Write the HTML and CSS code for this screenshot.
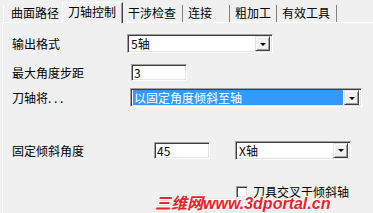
FILE: index.html
```html
<!DOCTYPE html>
<html>
<head>
<meta charset="utf-8">
<link rel="stylesheet" href="styles.css">
</head>
<body>
<div class="win">
  <div class="tabs">
    <div class="tab t1">曲面路径</div>
    <div class="tab active t2">刀轴控制</div>
    <div class="tab t3">干涉检查</div>
    <div class="tab t4">连接</div>
    <div class="tab t5">粗加工</div>
    <div class="tab t6">有效工具</div>
  </div>
  <div class="panel">
    <div class="row r1">
      <span class="label">输出格式</span>
      <div class="combo c1"><span class="val">5轴</span><span class="btn"><i></i></span></div>
    </div>
    <div class="row r2">
      <span class="label">最大角度步距</span>
      <div class="edit e1">3</div>
    </div>
    <div class="row r3">
      <span class="label">刀轴将. . .</span>
      <div class="combo c2"><span class="val sel">以固定角度倾斜至轴</span><span class="btn"><i></i></span></div>
    </div>
    <div class="row r4">
      <span class="label">固定倾斜角度</span>
      <div class="edit e2">45</div>
      <div class="combo c3"><span class="val">X轴</span><span class="btn"><i></i></span></div>
    </div>
    <div class="row r5">
      <span class="check"></span>
      <span class="clabel">刀具交叉于倾斜轴</span>
    </div>
  </div>
  <div class="watermark">三维网www.3dportal.cn</div>
</div>
</body>
</html>
```

FILE: styles.css
```css
html, body {
  margin: 0;
  padding: 0;
  background: #f0f0f0;
}
body {
  font-family: "Noto Sans CJK SC", "Liberation Sans", sans-serif;
  font-size: 12px;
  color: #000;
  width: 373px;
  height: 213px;
  overflow: hidden;
}
.win {
  position: relative;
  width: 373px;
  height: 213px;
}
.tabs {
  display: flex;
  align-items: flex-end;
  height: 22px;
  padding-left: 3px;
  position: relative;
  z-index: 2;
}
.tab {
  box-sizing: border-box;
  height: 17px;
  line-height: 16px;
  padding-left: 6px;
  white-space: nowrap;
  border-right: 1px solid #808080;
}
.t1 { width: 59px; padding-left: 7px; border-right: none; border-left: 1px solid #fff; }
.t2 {
  width: 61px;
  height: 21px;
  line-height: 18px;
  margin-bottom: -1px;
  padding-left: 5px;
  background: #f0f0f0;
  border-top: 1px solid #fff;
  border-left: 1px solid #fff;
  border-right: 1px solid #404040;
  box-shadow: inset -1px 0 0 #a0a0a0;
}
.t3 { width: 60px; padding-left: 5px; }
.t4 { width: 47px; padding-left: 5px; }
.t5 { width: 47px; padding-left: 5px; }
.t6 { width: 60px; padding-left: 5px; }

.panel {
  box-sizing: border-box;
  margin-left: 2px;
  height: 191px;
  border-top: 1px solid #fff;
  border-left: 1px solid #fff;
  padding-top: 11px;
}
.row {
  display: flex;
  align-items: center;
}
.label {
  width: 115px;
  padding-left: 9px;
  white-space: nowrap;
  flex: none;
}
.r1 { height: 19px; }
.r2 { height: 17px; margin-top: 11px; }
.r3 { height: 19px; margin-top: 7px; }
.r4 { height: 18px; margin-top: 34px; }
.r5 { height: 13px; margin-top: 26px; padding-left: 233px; }

.edit, .combo {
  box-sizing: border-box;
  background: #fff;
  border-top: 1px solid #a0a0a0;
  border-left: 1px solid #a0a0a0;
  border-right: 1px solid #fff;
  border-bottom: 1px solid #fff;
  box-shadow: inset 1px 1px 0 #404040, inset -1px -1px 0 #e3e3e3;
  display: flex;
  align-items: center;
  padding-left: 2px;
  white-space: nowrap;
  flex: none;
}
.edit { height: 17px; width: 56px; }
.e1 { margin-left: 4px; }
.e2 { margin-left: 27px; }
.combo { height: 19px; justify-content: space-between; padding-right: 2px; }
.c1 { width: 146px; }
.c2 { width: 232px; margin-left: 3px; }
.c3 { width: 116px; margin-left: 25px; }
.val { line-height: 15px; height: 15px; padding: 0 1px; }
.val.sel {
  background: #3399ff;
  color: #fff;
  flex: 1;
  margin-right: 1px;
}
.btn {
  box-sizing: border-box;
  width: 15px;
  height: 15px;
  background: #f0f0f0;
  border-top: 1px solid #e3e3e3;
  border-left: 1px solid #e3e3e3;
  border-right: 1px solid #404040;
  border-bottom: 1px solid #404040;
  box-shadow: inset 1px 1px 0 #fff, inset -1px -1px 0 #a0a0a0;
  display: flex;
  align-items: center;
  justify-content: center;
  flex: none;
}
.btn i {
  width: 0;
  height: 0;
  border-left: 3px solid transparent;
  border-right: 3px solid transparent;
  border-top: 3px solid #000;
  margin-top: 1px;
}
.check {
  box-sizing: border-box;
  width: 12px;
  height: 12px;
  background: #fff;
  border-top: 1px solid #a0a0a0;
  border-left: 1px solid #a0a0a0;
  border-right: 1px solid #fff;
  border-bottom: 1px solid #fff;
  box-shadow: inset 1px 1px 0 #404040, inset -1px -1px 0 #e3e3e3;
  flex: none;
}
.clabel { margin-left: 5px; white-space: nowrap; line-height: 13px; }

.watermark {
  position: absolute;
  left: 155px;
  top: 195px;
  font-family: "Liberation Sans", "Noto Sans CJK SC", sans-serif;
  font-weight: bold;
  font-style: italic;
  font-size: 16px;
  line-height: 17px;
  color: #e8232a;
  white-space: nowrap;
  text-shadow: 1px 0 0 #fff, -1px 0 0 #fff, 0 1px 0 #fff, 0 -1px 0 #fff, 1px 1px 0 #fff, -1px -1px 0 #fff, 1px -1px 0 #fff, -1px 1px 0 #fff, 0 0 2px #c00;
  z-index: 3;
}
```
